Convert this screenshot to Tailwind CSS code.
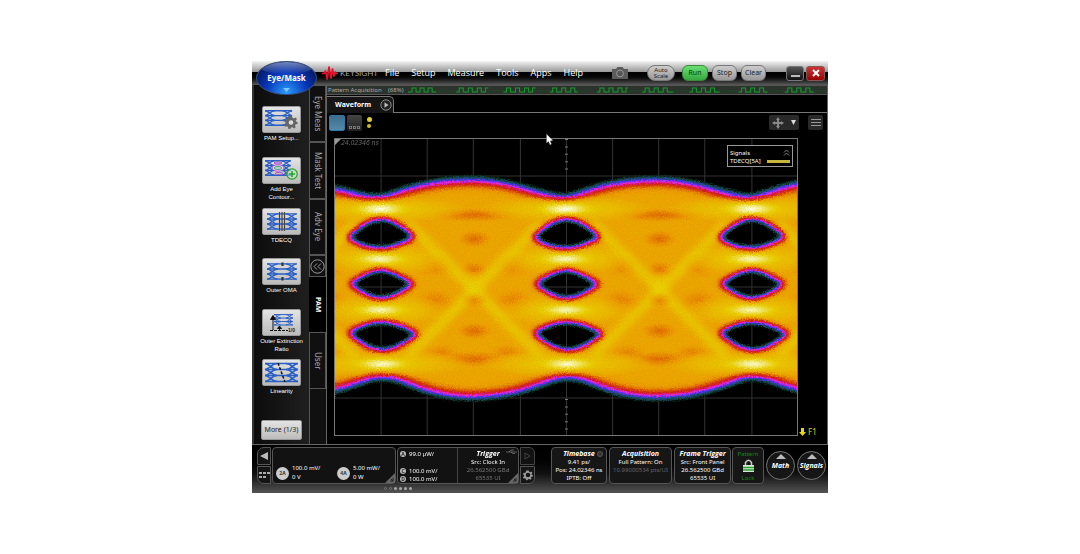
<!DOCTYPE html>
<html lang="en">
<head>
<meta charset="utf-8">
<title>Keysight Eye/Mask</title>
<script src="https://cdn.jsdelivr.net/npm/@tailwindcss/browser@4"></script>
</head>
<body class="bg-white font-['Noto_Sans','Open_Sans',sans-serif] text-[6px] leading-[8px] text-gray-200">
<svg class="absolute size-0" aria-hidden="true">
  <defs>
    <g id="lanes" fill="none" stroke="#2a5fc4" stroke-width="1.700">
      <path d="M0 1H33M0 7H33M0 13H33M0 19H33"/>
      <path d="M0 1C5 1 6 7 12 7M0 7C5 7 6 1 12 1M0 7C5 7 6 13 12 13M0 13C5 13 6 7 12 7M0 13C5 13 6 19 12 19M0 19C5 19 6 13 12 13M21 1C27 1 28 7 33 7M21 7C27 7 28 1 33 1M21 7C27 7 28 13 33 13M21 13C27 13 28 7 33 7M21 13C27 13 28 19 33 19M21 19C27 19 28 13 33 13"/>
    </g>
    <path id="gear" d="M-1-6H1L1.500-4.300 3-3.600 4.600-4.600 6-3 4.700-1.500 5-.5 6.500 0V2L4.700 2.300 4 3.600 4.800 5.100 3.200 6.400 1.700 5.200 0 5.500-.8 7H-2.500L-3 5-4.200 4.200-5.900 4.800-6.800 3-5.300 1.700-5.300 0-6.700-1.100-5.800-2.900-4-2.700-2.700-3.900-2.700-5.700Z"/>
  </defs>
</svg>
<div class="mx-auto mt-[61px] w-8/15 min-w-[576px] bg-black">
  <header class="relative flex h-[24px] items-center bg-linear-to-b from-[#f4f4f4] via-[#999] via-45% to-[#4a4a4a]">
    <div class="absolute inset-x-0 bottom-0 top-[11px] bg-linear-to-b from-black via-[#111] to-[#5a5a5a]"></div>
    <button class="absolute top-0 left-[4px] z-10 flex h-[34px] w-[61px] items-center justify-center overflow-hidden rounded-[50%] border border-[#35507c] bg-radial-[at_50%_100%] from-[#2ba0ff] via-[#0835b8] via-50% to-[#020c35] text-[8px] font-bold text-white"><span class="absolute inset-x-1 top-0 h-3 rounded-[50%] bg-linear-to-b from-white/45 to-transparent"></span><span class="relative">Eye/Mask</span><svg class="absolute bottom-[2px] h-[4px] w-[7px]" viewBox="0 0 7 4"><path d="M0 0H7L3.500 4Z" fill="#7cc8ff"/></svg></button>
    <div class="relative flex flex-1 items-center pl-[70px]">
      <svg class="h-[14px] w-[16px]" viewBox="0 0 16 14" fill="none" stroke="#e5122d" stroke-width="1.700" stroke-linejoin="round"><path d="M0 7.500H2L3.500 5 5.200 13 7 1 9 12 10.500 3 12 10 13.200 6 14 7.500H16"/></svg>
      <span class="ml-[2px] w-[38px] font-['Lato'] text-[8px] text-[#a5a5a5]">KEYSIGHT</span>
      <nav class="ml-[7px] flex gap-[12px] font-['Open_Sans'] text-[9px] leading-[14px] text-white">
        <a href="#">File</a><a href="#">Setup</a><a href="#">Measure</a><a href="#">Tools</a><a href="#">Apps</a><a href="#">Help</a>
      </nav>
      <button class="ml-[28px]" aria-label="Screenshot"><svg class="h-[14px] w-[18px]" viewBox="0 0 18 14"><path d="M1 3H5L6.500 1H11.500L13 3H17V13H1Z" fill="#5c5c5c"/><circle cx="9" cy="7.500" r="3.400" fill="#555" stroke="#999"/></svg></button>
    </div>
    <div class="relative mr-[3px] flex items-center gap-[4px] text-[7px] text-[#222]">
      <button class="h-[16px] w-[28px] rounded-[8px] border border-[#777] bg-linear-to-b from-[#ccc] to-[#999] text-[6px] leading-[6px]">Auto<br>Scale</button>
      <button class="ml-[3px] h-[16px] w-[26px] rounded-[6px] border border-[#3a8a3a] bg-linear-to-b from-[#68df70] to-[#35a83f] text-[#063c0b]">Run</button>
      <button class="h-[16px] w-[25px] rounded-[6px] border border-[#777] bg-linear-to-b from-[#ccc] to-[#999]">Stop</button>
      <button class="h-[16px] w-[25px] rounded-[6px] border border-[#777] bg-linear-to-b from-[#ccc] to-[#999]">Clear</button>
      <button class="ml-[16px] flex h-[15px] w-[18px] items-end justify-center rounded-[3px] border border-[#777] bg-linear-to-b from-[#555] to-[#111] pb-[3px]" aria-label="Minimize"><span class="h-[2px] w-[9px] bg-[#bbb]"></span></button>
      <button class="-ml-[2px] flex h-[15px] w-[19px] items-center justify-center rounded-[3px] border border-[#855] bg-linear-to-b from-[#c33] to-[#900]" aria-label="Close"><svg class="size-[8px]" viewBox="0 0 8 8" stroke="#fff" stroke-width="2"><path d="M1 1L7 7M7 1L1 7"/></svg></button>
    </div>
  </header>

  <div class="flex">
    <aside class="flex w-[57px] flex-col items-center border-l-2 border-[#333] bg-linear-to-r from-[#0c0c0c] to-[#1f1f1f] pt-[21px] text-center font-['Liberation_Sans',sans-serif] text-white">
      <button class="flex h-[51px] flex-col items-center"><span class="rounded-[2px] border border-[#999] bg-linear-to-b from-[#e4e4e4] to-[#bbb]"><svg class="h-[25px] w-[37px]" viewBox="0 0 37 25"><g transform="translate(2 3) scale(.82 .8)"><use href="#lanes"/></g><use href="#gear" transform="translate(28 15)" fill="#646464"/><circle cx="28" cy="15.500" r="2.300" fill="#ddd"/></svg></span><span class="mt-[1px]">PAM Setup...</span></button>
      <button class="flex h-[51px] flex-col items-center"><span class="rounded-[2px] border border-[#999] bg-linear-to-b from-[#e4e4e4] to-[#bbb]"><svg class="h-[25px] w-[37px]" viewBox="0 0 37 25"><g transform="translate(2 2) scale(.78 .8)"><use href="#lanes"/></g><g fill="#ccc" stroke="#b255cc"><ellipse cx="15" cy="5" rx="4" ry="1"/><ellipse cx="16" cy="15.500" rx="4" ry="1"/></g><ellipse cx="15" cy="10" rx="6" ry="3.200" fill="#ddd" stroke="#b255cc"/><ellipse cx="15" cy="10" rx="3.800" ry="1.600" fill="#b6d3c8" stroke="#57a38b"/><circle cx="29" cy="16" r="5.200" fill="#cfe4cf" fill-opacity=".6" stroke="#21a321" stroke-width="1.200"/><path d="M29 13V19M26 16H32" stroke="#21a321" stroke-width="1.600"/></svg></span><span class="mt-[1px]">Add Eye<br>Contour...</span></button>
      <button class="flex h-[50px] flex-col items-center"><span class="rounded-[2px] border border-[#999] bg-linear-to-b from-[#e4e4e4] to-[#bbb]"><svg class="h-[25px] w-[37px]" viewBox="0 0 37 25"><g transform="translate(4 4) scale(.9 .85)"><use href="#lanes"/></g><path d="M16.500 3V22M19 3V22M21.500 3V22" stroke="#444" stroke-width="1.200"/></svg></span><span class="mt-[1px]">TDECQ</span></button>
      <button class="flex h-[51px] flex-col items-center"><span class="rounded-[2px] border border-[#999] bg-linear-to-b from-[#e4e4e4] to-[#bbb]"><svg class="h-[25px] w-[37px]" viewBox="0 0 37 25"><g transform="translate(4 4) scale(.9 .85)"><use href="#lanes"/></g><path d="M19.500 3.500V7M19.500 18V21.500" stroke="#333" stroke-width="2.200"/></svg></span><span class="mt-[1px]">Outer OMA</span></button>
      <button class="flex h-[50px] flex-col items-center"><span class="rounded-[2px] border border-[#999] bg-linear-to-b from-[#e4e4e4] to-[#bbb]"><svg class="h-[25px] w-[37px]" viewBox="0 0 37 25"><g transform="translate(11 4) scale(.57 .58)"><use href="#lanes"/></g><path d="M10 20V7M7.500 9.500L10 5.500 12.500 9.500ZM16.500 20V17.500M14.500 18.500L16.500 16 18.500 18.500Z" fill="#111" stroke="#111"/><path d="M7 20.500H25" stroke="#111" stroke-dasharray="3 1"/><text x="25" y="22" font-size="5" font-weight="bold" fill="#222">1/0</text></svg></span><span class="mt-[1px]">Outer Extinction<br>Ratio</span></button>
      <button class="flex h-[51px] flex-col items-center"><span class="rounded-[2px] border border-[#999] bg-linear-to-b from-[#e4e4e4] to-[#bbb]"><svg class="h-[25px] w-[37px]" viewBox="0 0 37 25"><g transform="translate(2 2.500)"><use href="#lanes"/></g><path d="M15 3L22 22" fill="none" stroke="#111" stroke-width="1.500" stroke-dasharray="3 1.500"/></svg></span><span class="mt-[1px]">Linearity</span></button>
      <button class="mt-[10px] h-[20px] w-[41px] rounded-[2px] border border-[#999] bg-linear-to-b from-[#e4e4e4] to-[#bbb] font-['Noto_Sans'] text-[7px] text-[#222]">More (1/3)</button>
    </aside>

    <div class="flex w-[17px] flex-col items-stretch bg-[#101010] text-[8px] leading-[10px] text-[#aaa]">
      <button class="flex h-[57px] items-center justify-center rounded-tl border border-[#555] [writing-mode:vertical-rl]">Eye Meas</button>
      <button class="flex h-[57px] items-center justify-center border border-[#555] [writing-mode:vertical-rl]">Mask Test</button>
      <button class="flex h-[56px] items-center justify-center border border-[#555] [writing-mode:vertical-rl]">Adv Eye</button>
      <button class="flex h-[22px] items-center justify-center border border-[#555]" aria-label="Collapse"><svg class="size-[15px] shrink-0" viewBox="0 0 15 15" fill="none" stroke="#999"><circle cx="7.500" cy="7.500" r="6.700"/><path d="M7 4.500L4 7.500 7 10.500M11 4.500L8 7.500 11 10.500"/></svg></button>
      <button class="flex h-[55px] items-center justify-center bg-black text-[7px] font-bold text-white [writing-mode:vertical-rl]">PAM</button>
      <button class="flex h-[57px] items-center justify-center border border-[#555] [writing-mode:vertical-rl]">User</button>
      <div class="flex-1 border-l border-[#555]"></div>
    </div>

    <main class="flex min-w-0 flex-1 flex-col border-x border-[#666]">
      <div class="flex h-[10px] items-center border-y border-[#555] bg-[#2c332d] pl-px text-[#aaa]">
        <span class="w-[60px]">Pattern Acquisition</span><span class="w-[20px]">(68%)</span>
        <svg class="h-[8px] flex-1" viewBox="0 0 417 8" preserveAspectRatio="none" fill="none">
          <path d="M0 5H417" stroke="#174d1d" stroke-dasharray="2 1"/>
          <path stroke="#189b2e" d="M0 6H4V2H8V6H12V2H16V6H20V2H24V6H28M48 6H51V2H55V6H60V2H64V6H69V2H73V6H77V2H80M95 6H98V2H102V6H107V2H111V6H116V2H120V6H124V2H127M141 6H144V2H148V6H153V2H157V6H162V2H166V6H169M188 6H191V2H195V6H200V2H204V6H209V2H213V6H217V2H219M233 6H236V2H240V6H245V2H249V6H254V2H258V6H264M280 6H283V2H287V6H292V2H296V6H301V2H305V6H310M329 6H332V2H336V6H341V2H345V6H350V2H354V6H358M375 6H378V2H382V6H387V2H391V6H396V2H400V6H404"/>
        </svg>
      </div>
      <div class="flex h-[18px] items-end border-b border-[#777]">
        <button class="-mb-px flex h-[17px] w-[67px] items-center justify-between rounded-tr-[5px] border-t border-r border-[#777] bg-[#151515] pr-px pl-[8px] text-[7px] font-bold text-white">Waveform<svg class="size-[12px]" viewBox="0 0 12 12"><circle cx="6" cy="6" r="5.200" fill="#222" stroke="#888"/><path d="M4.500 3.200L8.500 6 4.500 8.800Z" fill="#bbb"/></svg></button>
      </div>
      <div class="flex h-[25px] items-start gap-[2px] pt-[2px] pr-[4px] pl-[2px]">
        <button class="size-[16px] rounded-[2px] border border-[#2f79aa] bg-linear-to-b from-[#3d6d8e] to-[#558aaa]" aria-label="Single view"></button>
        <button class="flex h-[16px] w-[15px] items-end justify-center gap-px rounded-[2px] bg-linear-to-b from-[#444] to-[#222] pb-[2px]" aria-label="Tiled view"><span class="size-[3px] border border-[#777]"></span><span class="size-[3px] border border-[#777]"></span><span class="size-[3px] border border-[#777]"></span></button>
        <span class="flex flex-1 flex-col gap-[2px] pt-[2px] pl-[3px]"><span class="size-[5px] rounded-full bg-[#e0cf2d]"></span><span class="size-[4px] rounded-full bg-[#d0bf1c]"></span></span>
        <button class="flex h-[15px] w-[30px] items-center justify-around rounded-[2px] bg-[#292929]" aria-label="Move"><svg class="size-[12px]" viewBox="0 0 12 12" fill="#888"><path d="M6 0L8 3H7V5H9V4L12 6 9 8V7H7V9H8L6 12 4 9H5V7H3V8L0 6 3 4V5H5V3H4Z"/></svg><svg class="size-[5px]" viewBox="0 0 5 5"><path d="M0 0H5L2.500 5Z" fill="#ddd"/></svg></button>
        <button class="ml-[7px] flex size-[15px] flex-col items-center justify-center gap-[2px] rounded-[2px] bg-[#292929]" aria-label="Menu"><span class="h-px w-[10px] bg-[#999]"></span><span class="h-px w-[10px] bg-[#999]"></span><span class="h-px w-[10px] bg-[#999]"></span></button>
      </div>
      <div class="flex pb-[8px] pl-[7px]">
        <div class="relative min-w-0 flex-1 border border-[#777]">
          <svg class="block h-[296px] w-full" viewBox="0 0 461 296" preserveAspectRatio="none">
            <defs>
              <filter id="heat" filterUnits="userSpaceOnUse" x="0" y="0" width="461" height="296" color-interpolation-filters="sRGB">
                <feTurbulence type="fractalNoise" baseFrequency=".75" numOctaves="2" seed="4" result="n"/>
                <feDisplacementMap in="SourceGraphic" in2="n" scale="4" xChannelSelector="R" yChannelSelector="G" result="d"/>
                <feColorMatrix in="n" values="1 0 0 0 0 1 0 0 0 0 1 0 0 0 0 0 0 0 0 1" result="m"/>
                <feComposite in="d" in2="m" operator="arithmetic" k1=".08" k2=".96"/>
                <feColorMatrix values="1 0 0 0 0 0 1 0 0 0 0 0 1 0 0 12 0 0 0 -.6"/>
                <feComponentTransfer>
                  <feFuncR type="table" tableValues="0 .05 .10 .32 .90 .82 .84 .92 .91 .95 1"/>
                  <feFuncG type="table" tableValues="0 .2 .30 .2 .16 .09 .28 .62 .80 .92 1"/>
                  <feFuncB type="table" tableValues="0 .12 .42 .95 .85 .18 0 0 0 .5 .95"/>
                </feComponentTransfer>
              </filter>
              <filter id="soft2" filterUnits="userSpaceOnUse" x="-30" y="-30" width="520" height="360" color-interpolation-filters="sRGB"><feGaussianBlur stdDeviation="3"/></filter>
              <filter id="soft4" filterUnits="userSpaceOnUse" x="-30" y="-30" width="520" height="360" color-interpolation-filters="sRGB"><feGaussianBlur stdDeviation="4"/></filter>
              <filter id="soft5" filterUnits="userSpaceOnUse" x="-60" y="-30" width="600" height="360" color-interpolation-filters="sRGB"><feGaussianBlur stdDeviation="4.500"/></filter>
              <radialGradient id="hot"><stop offset="0" stop-color="#fff"/><stop offset=".35" stop-color="#eee" stop-opacity=".75"/><stop offset="1" stop-color="#ccc" stop-opacity="0"/></radialGradient>
              <radialGradient id="cool"><stop offset="0" stop-color="#9a9a9a" stop-opacity=".65"/><stop offset="1" stop-color="#9a9a9a" stop-opacity="0"/></radialGradient>
              <radialGradient id="glow"><stop offset="0" stop-color="#cfcfcf"/><stop offset="1" stop-color="#cfcfcf" stop-opacity="0"/></radialGradient>
              <path id="env" d="M-94 42C-50 42 -20 47 10 53C25 57 35 60 45 59C60 58 80 42 136 42C170 42 190 52 215 57C222 59 227 60 230 59C245 58 265 42 321 42C355 42 375 52 400 57C407 59 412 60 415 59C430 58 450 42 506 42V255C465 255 445 243 430 239C422 237 412 236 405 239C385 246 360 257 321 257C282 257 260 243 245 239C237 237 227 237 220 239C200 246 175 257 136 257C97 257 75 243 60 239C52 237 42 237 35 239C15 246 -10 256 -60 256Z"/>
              <g id="cell">
                <g fill="none" stroke="#cecece" stroke-width="8" filter="url(#soft5)"><path d="M72 84L206 218M206 84L72 218"/></g>
                <ellipse cx="139" cy="146" rx="14" ry="14" fill="url(#glow)" opacity=".6"/>
                <g fill="url(#cool)"><ellipse cx="139" cy="76" rx="46" ry="7"/><ellipse cx="139" cy="100" rx="17" ry="9"/><ellipse cx="139" cy="130" rx="13" ry="8" opacity=".8"/><ellipse cx="139" cy="161" rx="13" ry="8" opacity=".8"/><ellipse cx="139" cy="192" rx="18" ry="9"/><ellipse cx="139" cy="220" rx="35" ry="8"/><ellipse cx="107" cy="213" rx="18" ry="8" opacity=".6"/><ellipse cx="171" cy="213" rx="18" ry="8" opacity=".6"/><ellipse cx="100" cy="163" rx="20" ry="14" opacity=".7"/><ellipse cx="178" cy="163" rx="20" ry="14" opacity=".7"/><ellipse cx="100" cy="127" rx="18" ry="13" opacity=".5"/><ellipse cx="178" cy="127" rx="18" ry="13" opacity=".5"/></g>
              </g>
              <g id="rows">
                <g fill="url(#glow)"><ellipse cx="46" cy="70" rx="90" ry="14"/><ellipse cx="46" cy="120" rx="75" ry="16"/><ellipse cx="46" cy="171" rx="75" ry="16"/><ellipse cx="46" cy="225" rx="90" ry="14"/></g>
                <g fill="url(#hot)"><ellipse cx="45" cy="70" rx="32" ry="9"/><ellipse cx="45" cy="120" rx="32" ry="8" opacity=".82"/><ellipse cx="45" cy="171" rx="32" ry="8" opacity=".78"/><ellipse cx="47" cy="225" rx="32" ry="8" opacity=".9"/></g>
              </g>
              <g id="eyes"><path d="M12 98C24 90 32 81 45 80C58 80 67 88 80 98C66 104 58 109 46 109C33 109 24 106 12 98Z"/><path d="M14 145C26 138 34 132 46 131C57 132 65 138 79 145C66 152 58 159 46 159C34 159 27 152 14 145Z"/><path d="M13 194C26 187 34 183 46 183C58 183 67 187 83 195C68 204 59 211 47 211C34 210 25 203 13 194Z"/></g>
            </defs>
            <g stroke="#333" stroke-width="1"><path d="M46 0V296M92 0V296M138 0V296M185 0V296M231 0V296M277 0V296M323 0V296M369 0V296M416 0V296M0 37H461M0 74H461M0 111H461M0 148H461M0 185H461M0 222H461M0 259H461"/></g>
            <g filter="url(#heat)">
              <rect width="461" height="296" fill="#000"/>
              <use href="#env" fill="#b6b6b6" filter="url(#soft2)"/>
              <use href="#env" fill="none" stroke="#686868" stroke-opacity=".6" stroke-width="7" filter="url(#soft4)"/>
              <use href="#cell"/><use href="#cell" x="185"/><use href="#cell" x="-185"/><use href="#cell" x="370"/>
              <use href="#rows"/><use href="#rows" x="185"/><use href="#rows" x="370"/>
              <g filter="url(#soft2)"><use href="#eyes"/><use href="#eyes" x="185"/><use href="#eyes" x="370"/></g>
            </g>
            <path d="M231 0V37M231 260V296" stroke="#777" stroke-width="3" stroke-dasharray="1 6.400"/>
            <path d="M0 0H6L0 6Z" fill="#999"/>
          </svg>
          <span class="absolute top-0 left-[6px] text-[7px] text-[#666] italic">24.02346 ns</span>
          <div class="absolute top-[6px] right-[4px] h-[22px] w-[66px] border border-[#999] bg-black px-[2px] pt-[3px] text-white">
            <div class="flex justify-between"><span>Signals</span><svg class="size-[7px]" viewBox="0 0 7 7" fill="none" stroke="#888"><path d="M1 3.500L3.500 1 6 3.500M1 6.500L3.500 4 6 6.500"/></svg></div>
            <div class="flex items-center justify-between"><span>TDECQ[5A]</span><span class="h-[3px] w-[23px] bg-[#c8b53c]"></span></div>
          </div>
          <svg class="absolute -top-[5px] left-[211px] h-[12px] w-[8px]" viewBox="0 0 8 12"><path d="M.5 0V9L2.500 7.500 4 11 5.500 10 4.200 7 7 6.500Z" fill="#fff" stroke="#555" stroke-width=".4"/></svg>
        </div>
        <div class="flex w-[29px] items-end gap-[2px] pl-px text-[8px] leading-[8px] text-[#d8cd24]"><svg class="h-[8px] w-[7px]" viewBox="0 0 7 8"><path d="M2 0H5V4H7L3.500 8 0 4H2Z" fill="#e3d81c"/></svg><span>F1</span></div>
      </div>
    </main>
  </div>

  <footer class="border-t border-[#666] bg-linear-to-b from-black via-[#111] via-60% to-[#555] px-[2px] pt-[2px]">
    <div class="flex h-[37px] gap-[2px] pl-[3px] text-center">
      <div class="flex w-[14px] flex-col gap-px">
        <button class="flex flex-1 items-center justify-center rounded-tl-[7px] border border-[#555] bg-[#151515]" aria-label="Previous"><svg class="size-[8px]" viewBox="0 0 8 8"><path d="M8 0V8L0 4Z" fill="#bbb"/></svg></button>
        <button class="flex flex-1 items-center justify-center rounded-bl-[7px] border border-[#555] bg-[#151515]" aria-label="Channels"><svg class="h-[7px] w-[11px]" viewBox="0 0 11 7" fill="#aaa"><path d="M0 0H3V2H0ZM4 0H7V2H4ZM8 0H11V2H8ZM0 4H3V6H0ZM4 4H7V6H4Z"/></svg></button>
      </div>
      <section class="relative -ml-px flex flex-[124] items-end rounded-[4px] border border-[#555] bg-[#121212] pb-px pl-[3px] text-left text-white">
        <div class="flex w-[61px] items-center gap-[3px]"><span class="flex size-[13px] items-center justify-center rounded-full bg-[#ccc] text-[5px] font-bold text-[#333]">2A</span><span class="leading-[9px]">100.0 mV/<br>0 V</span></div>
        <div class="flex items-center gap-[3px]"><span class="flex size-[13px] items-center justify-center rounded-full bg-[#ccc] text-[5px] font-bold text-[#333]">4A</span><span class="leading-[9px]">5.00 mW/<br>0 W</span></div>
        <svg class="absolute right-0 bottom-0 size-[10px]" viewBox="0 0 10 10"><path d="M10 0V10H0Z" fill="#666"/><path d="M6 6L8 8M8 5V8H5" stroke="#222" fill="none"/></svg>
      </section>
      <section class="relative -ml-px flex flex-[125] rounded-[4px] border border-[#555] bg-[#121212] text-white">
        <div class="flex w-1/2 flex-col border-r border-[#444] pl-[2px] text-left">
          <span class="flex items-center gap-[3px] pt-[2px]"><i class="flex size-[6px] items-center justify-center rounded-full bg-[#bbb] text-[5px] leading-[5px] font-bold text-[#222] not-italic">A</i>99.0 µW/</span>
          <span class="mt-[9px] flex items-center gap-[3px]"><i class="flex size-[6px] items-center justify-center rounded-full bg-[#bbb] text-[5px] leading-[5px] font-bold text-[#222] not-italic">C</i>100.0 mV/</span>
          <span class="flex items-center gap-[3px]"><i class="flex size-[6px] items-center justify-center rounded-full bg-[#bbb] text-[5px] leading-[5px] font-bold text-[#222] not-italic">D</i>100.0 mV/</span>
        </div>
        <div class="w-1/2 pt-[2px]"><h2 class="font-['Open_Sans'] text-[7px] font-bold italic">Trigger</h2><p>Src: Clock In</p><p class="text-[#777]">26.562500 GBd<br>65535 UI</p></div>
        <svg class="absolute top-[1px] right-[1px] h-[5px] w-[11px]" viewBox="0 0 11 5" fill="none" stroke="#777" stroke-width=".8"><path d="M0 3H11M3 3L5 1H8M5 3L7 4.500H9"/></svg>
        <svg class="absolute right-0 bottom-0 size-[10px]" viewBox="0 0 10 10"><path d="M10 0V10H0Z" fill="#666"/><path d="M6 6L8 8M8 5V8H5" stroke="#222" fill="none"/></svg>
      </section>
      <div class="-ml-px flex w-[15px] flex-col gap-px">
        <button class="flex flex-1 items-center justify-center rounded-tr-[6px] border border-[#444] bg-[#111]" aria-label="Play"><svg class="size-[8px]" viewBox="0 0 8 8"><path d="M1 1V7L6 4Z" fill="none" stroke="#444"/></svg></button>
        <button class="flex flex-1 items-center justify-center rounded-br-[6px] border border-[#555] bg-[#151515]" aria-label="Settings"><svg class="size-[12px]" viewBox="-8 -8 16 16"><use href="#gear" fill="#999"/><circle r="3" fill="#151515"/></svg></button>
      </div>
      <section class="relative ml-[14px] flex-[56] rounded-[4px] border border-[#555] bg-[#161616] pt-[2px] whitespace-nowrap text-white"><h2 class="font-['Open_Sans'] text-[7px] font-bold italic">Timebase</h2><p>9.41 ps/<br>Pos: 24.02346 ns<br>IPTB: Off</p><span class="absolute top-[3px] right-[3px] size-[6px] rounded-full border border-[#555] bg-[#333]"></span></section>
      <section class="flex-[64] rounded-[4px] border border-[#555] bg-[#161616] pt-[2px] whitespace-nowrap text-white"><h2 class="font-['Open_Sans'] text-[7px] font-bold italic">Acquisition</h2><p>Full Pattern: On</p><p class="text-[#666]">10.99000534 pts/UI</p></section>
      <section class="flex-[57] rounded-[4px] border border-[#555] bg-[#161616] pt-[2px] whitespace-nowrap text-white"><h2 class="font-['Open_Sans'] text-[7px] font-bold italic">Frame Trigger</h2><p>Src: Front Panel<br>26.562500 GBd<br>65535 UI</p></section>
      <button class="-ml-px flex w-[32px] flex-col items-center justify-between rounded-[4px] border border-[#555] bg-[#161616] pt-[2px] pb-px text-[#178a1c]">Pattern<svg class="h-[14px] w-[11px]" viewBox="0 0 11 14"><path d="M2.500 6V3.500Q5.500-1 8.500 3.500V6" fill="none" stroke="#ccc" stroke-width="1.500"/><path d="M0 6H11V13H0Z" fill="#d6e8d6"/><path d="M0 8.500H11M0 11H11" stroke="#29a02e" stroke-width="1.300"/></svg>Lock</button>
      <button class="flex size-[29px] shrink-0 flex-col items-center self-center rounded-full border border-[#777] bg-[#161616] font-['Open_Sans'] text-[7px] font-bold text-white italic"><svg class="mt-[2px] h-[5px] w-[10px]" viewBox="0 0 10 5"><path d="M5 0L10 5H0Z" fill="#bbb"/></svg><span class="mt-[3px]">Math</span></button>
      <button class="flex size-[29px] shrink-0 flex-col items-center self-center rounded-full border border-[#777] bg-[#161616] font-['Open_Sans'] text-[7px] font-bold text-white italic"><svg class="mt-[2px] h-[5px] w-[10px]" viewBox="0 0 10 5"><path d="M5 0L10 5H0Z" fill="#bbb"/></svg><span class="mt-[3px]">Signals</span></button>
    </div>
    <div class="flex h-[9px] items-center gap-[2px] pl-[130px]"><span class="size-[3px] rounded-full border border-[#777]"></span><span class="size-[3px] rounded-full border border-[#777]"></span><span class="size-[3px] rounded-full bg-[#aaa]"></span><span class="size-[3px] rounded-full bg-[#aaa]"></span><span class="size-[3px] rounded-full bg-[#aaa]"></span><span class="size-[3px] rounded-full bg-[#aaa]"></span></div>
  </footer>
</div>
</body>
</html>
